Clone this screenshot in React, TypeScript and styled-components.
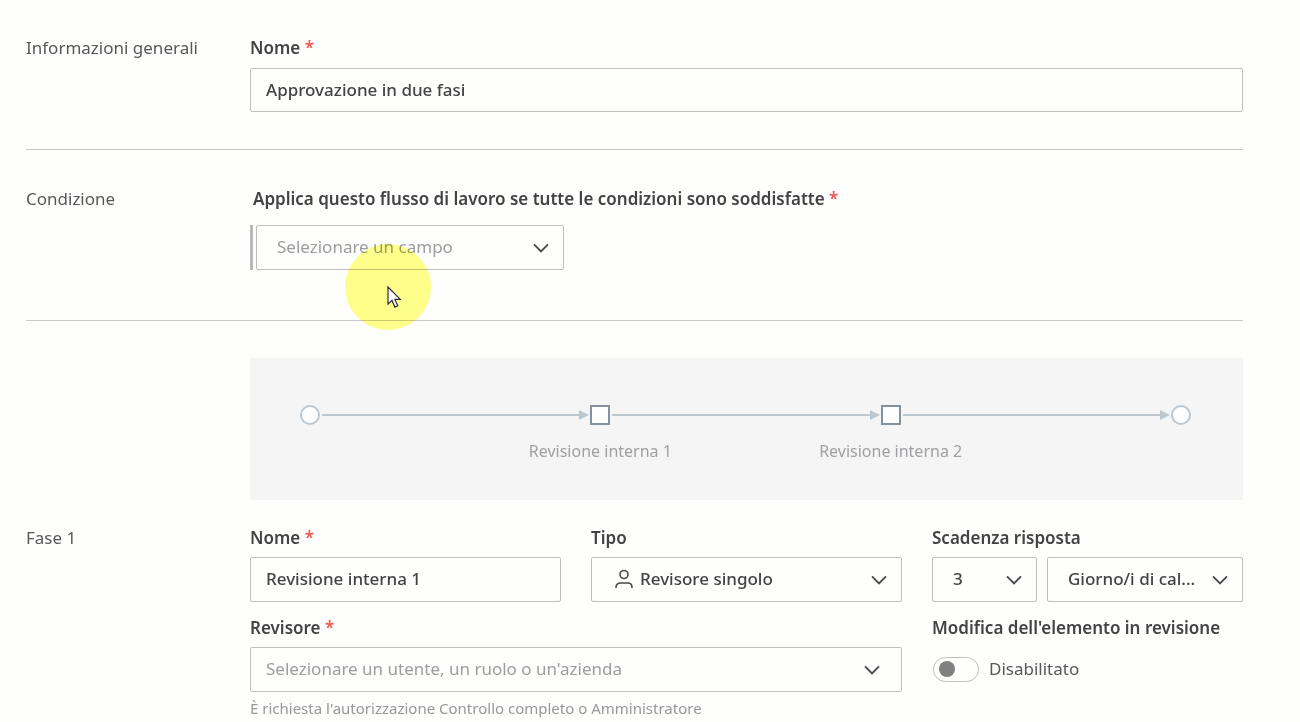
import React from "react";
import styled, { createGlobalStyle } from "styled-components";

const GlobalStyle = createGlobalStyle`
  *, *::before, *::after { box-sizing: border-box; }
  body {
    margin: 0;
    background: #fefefd;
    color: #4a4a4c;
    font-family: "Noto Sans", "Open Sans", sans-serif;
    font-size: 17px;
    line-height: 24px;
  }
`;

const Form = styled.form`
  padding: 0 57px 0 26px;
`;

const Section = styled.section<{ $top: number; $bottom: number }>`
  display: grid;
  grid-template-columns: 224px minmax(0, 1fr);
  padding: ${(p) => p.$top}px 0 ${(p) => p.$bottom}px;

  & + & {
    border-top: 1px solid #c9c9cd;
  }
`;

const SectionTitle = styled.h2`
  margin: 0;
  font-size: 17px;
  font-weight: 400;
  color: #58585a;
`;

const Field = styled.div<{ $span?: number; $gap?: number }>`
  display: flex;
  flex-direction: column;
  gap: ${(p) => p.$gap ?? 7}px;
  min-width: 0;
  grid-column: span ${(p) => p.$span ?? 1};
`;

const Label = styled.label<{ $indent?: boolean }>`
  padding-left: ${(p) => (p.$indent ? 3 : 0)}px;
  font-size: 17px;
  font-weight: 600;
  color: #434345;
`;

const Star = styled.span`
  color: #ee5a52;
`;

const TextInput = styled.input<{ $height: number }>`
  width: 100%;
  height: ${(p) => p.$height}px;
  padding: 0 15px 2px;
  border: 1px solid #bfbfc2;
  border-radius: 2px;
  background: transparent;
  color: #434345;
  font: inherit;
  font-weight: 500;
  outline: none;
`;

const SelectWrap = styled.div`
  position: relative;
  width: 100%;
`;

const SelectBox = styled.select<{ $left: number; $muted?: boolean }>`
  display: block;
  appearance: none;
  width: 100%;
  height: 45px;
  padding: 0 40px 2px ${(p) => p.$left}px;
  border: 1px solid #bfbfc2;
  border-radius: 2px;
  background: transparent;
  color: ${(p) => (p.$muted ? "#9d9da0" : "#434345")};
  font: inherit;
  font-weight: ${(p) => (p.$muted ? 400 : 500)};
  outline: none;
`;

const Chevron = styled.svg<{ $right: number }>`
  position: absolute;
  top: 18px;
  right: ${(p) => p.$right}px;
  width: 16px;
  height: 10px;
  pointer-events: none;
`;

const PersonIcon = styled.svg`
  position: absolute;
  top: 12px;
  left: 24px;
  width: 18px;
  height: 20px;
  pointer-events: none;
`;

const Condition = styled.div`
  position: relative;
  width: 314px;
  padding-left: 3px;
  border-left: 3px solid #b9b9bb;
`;

const Highlight = styled.div`
  position: absolute;
  top: 19px;
  left: 92px;
  width: 86px;
  height: 86px;
  border-radius: 50%;
  background: #ffff8c;
  mix-blend-mode: multiply;
  pointer-events: none;
`;

const Pointer = styled.svg`
  position: absolute;
  top: 61px;
  left: 134px;
  width: 15px;
  height: 23px;
  pointer-events: none;
`;

const Flow = styled.div`
  display: flex;
  align-items: flex-start;
  height: 142px;
  padding: 47px 52px 0 50px;
  background: #f5f5f6;
  font-size: 16px;
`;

const Step = styled.div`
  display: flex;
  flex-direction: column;
  align-items: center;
  gap: 14px;
  width: 20px;
  color: #a0a0a3;
  white-space: nowrap;
`;

const Marker = styled.span<{ $round?: boolean }>`
  flex: none;
  width: 20px;
  height: 20px;
  border: 2px solid ${(p) => (p.$round ? "#bcc8d0" : "#85919c")};
  border-radius: ${(p) => (p.$round ? "50%" : "0")};
  background: #fefefe;
`;

const Connector = styled.div`
  display: flex;
  flex: 1;
  align-items: center;
  height: 20px;
  margin: 0 1px 0 2px;

  &::before {
    content: "";
    flex: 1;
    height: 2px;
    background: #bcc8d0;
  }

  &::after {
    content: "";
    border-left: 10px solid #bcc8d0;
    border-top: 5px solid transparent;
    border-bottom: 5px solid transparent;
  }
`;

const Phase = styled.div`
  display: grid;
  grid-template-columns: 224px minmax(0, 1fr);
  grid-column: 1 / -1;
  padding-top: 26px;
`;

const Fields = styled.div`
  display: grid;
  grid-template-columns: repeat(3, minmax(0, 1fr));
  gap: 14px 30px;
`;

const Deadline = styled.div`
  display: grid;
  grid-template-columns: 105fr 196fr;
  gap: 10px;
`;

const Hint = styled.p`
  margin: 0;
  font-size: 15px;
  line-height: 18px;
  color: #98989b;
`;

const SwitchRow = styled.label`
  display: flex;
  align-items: center;
  gap: 10px;
  height: 44px;
  padding-left: 1px;
  color: #58585a;
`;

const Switch = styled.input`
  appearance: none;
  display: flex;
  align-items: center;
  width: 46px;
  height: 25px;
  margin: 0;
  padding: 0 5px;
  border: 1px solid #bfbfc2;
  border-radius: 13px;

  &::before {
    content: "";
    width: 16px;
    height: 16px;
    border-radius: 50%;
    background: #808080;
  }

  &:checked {
    justify-content: flex-end;
  }
`;

type DropdownProps = {
  id: string;
  text: string;
  left: number;
  right: number;
  muted?: boolean;
  name?: string;
  icon?: React.ReactNode;
};

function Dropdown({ id, text, left, right, muted, name, icon }: DropdownProps) {
  return (
    <SelectWrap>
      {icon}
      <SelectBox id={id} $left={left} $muted={muted} aria-label={name}>
        <option>{text}</option>
      </SelectBox>
      <Chevron $right={right} viewBox="0 0 16 10" fill="none" aria-hidden="true">
        <path d="M1 1.3 8 8.3l7-7" stroke="#4a4a4c" strokeWidth="1.9" />
      </Chevron>
    </SelectWrap>
  );
}

function Required() {
  return <Star> *</Star>;
}

export default function App() {
  return (
    <>
      <GlobalStyle />
      <Form>
        <Section $top={36} $bottom={37}>
          <SectionTitle>Informazioni generali</SectionTitle>
          <Field $gap={8}>
            <Label htmlFor="workflow-name">
              Nome
              <Required />
            </Label>
            <TextInput id="workflow-name" $height={44} defaultValue="Approvazione in due fasi" />
          </Field>
        </Section>

        <Section $top={37} $bottom={50}>
          <SectionTitle>Condizione</SectionTitle>
          <Field $gap={14}>
            <Label htmlFor="condition" $indent>
              Applica questo flusso di lavoro se tutte le condizioni sono soddisfatte
              <Required />
            </Label>
            <Condition>
              <Dropdown id="condition" text="Selezionare un campo" left={20} right={15} muted />
              <Highlight />
              <Pointer viewBox="0 0 15 23" aria-hidden="true">
                <path
                  d="M1 1v17.2l4-3.8 2.9 6.7 2.9-1.3-2.9-6.4h5.4z"
                  fill="#fff"
                  stroke="#2b2b38"
                  strokeWidth="1.2"
                />
              </Pointer>
            </Condition>
          </Field>
        </Section>

        <Section $top={37} $bottom={0}>
          <span />
          <Flow>
            <Step>
              <Marker $round />
            </Step>
            <Connector />
            <Step>
              <Marker />
              <span>Revisione interna 1</span>
            </Step>
            <Connector />
            <Step>
              <Marker />
              <span>Revisione interna 2</span>
            </Step>
            <Connector />
            <Step>
              <Marker $round />
            </Step>
          </Flow>
          <Phase>
            <SectionTitle>Fase 1</SectionTitle>
            <Fields>
              <Field>
                <Label htmlFor="phase-name">
                  Nome
                  <Required />
                </Label>
                <TextInput id="phase-name" $height={45} defaultValue="Revisione interna 1" />
              </Field>
              <Field>
                <Label htmlFor="phase-type">Tipo</Label>
                <Dropdown
                  id="phase-type"
                  text="Revisore singolo"
                  left={48}
                  right={15}
                  icon={
                    <PersonIcon viewBox="0 0 18 20" fill="none" stroke="#4a4a4c" strokeWidth="1.6" aria-hidden="true">
                      <circle cx="9" cy="5.5" r="4" />
                      <path d="M1 19v-.8c0-2.700 2-4.200 4.500-4.200h7c2.500 0 4.500 1.500 4.500 4.200v.8" />
                    </PersonIcon>
                  }
                />
              </Field>
              <Field>
                <Label htmlFor="deadline">Scadenza risposta</Label>
                <Deadline>
                  <Dropdown id="deadline" text="3" left={20} right={15} />
                  <Dropdown id="deadline-unit" name="Unità" text="Giorno/i di cal..." left={20} right={15} />
                </Deadline>
              </Field>
              <Field $span={2}>
                <Label htmlFor="reviewer">
                  Revisore
                  <Required />
                </Label>
                <Dropdown
                  id="reviewer"
                  text="Selezionare un utente, un ruolo o un'azienda"
                  left={15}
                  right={22}
                  muted
                />
                <Hint>È richiesta l'autorizzazione Controllo completo o Amministratore</Hint>
              </Field>
              <Field>
                <Label htmlFor="edit-item">Modifica dell'elemento in revisione</Label>
                <SwitchRow>
                  <Switch id="edit-item" type="checkbox" role="switch" />
                  Disabilitato
                </SwitchRow>
              </Field>
            </Fields>
          </Phase>
        </Section>
      </Form>
    </>
  );
}
